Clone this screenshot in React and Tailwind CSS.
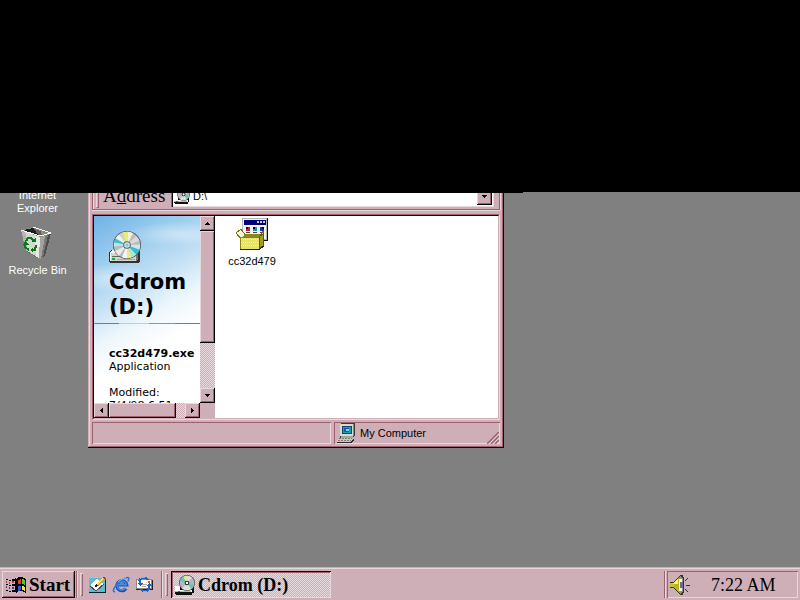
import React from "react";

const raised =
  "bg-[#cfafb7] shadow-[inset_-1px_-1px_#000,inset_1px_1px_#e7d8dc,inset_-2px_-2px_#9f6070]";
const thinSunken = "shadow-[inset_1px_1px_#9f6070,inset_-1px_-1px_#e7d8dc]";
const dither =
  "bg-[repeating-conic-gradient(#cfafb7_0_25%,#e7dade_0_50%)] bg-[length:2px_2px]";
const sans = "font-['Liberation_Sans',Arial,sans-serif] text-[11px] leading-[13px]";
const serif = "font-['Liberation_Serif','Times_New_Roman',serif]";

function CdDrive({ className }) {
  return (
    <svg viewBox="0 0 32 32" className={className} aria-hidden="true">
      <g shapeRendering="crispEdges">
        <path d="M0 21l3-2h26l2 2v9l-2 2H1l-1-1z" fill="#303030" />
        <path d="M1 21l3-2h23l-2 3z" fill="#f4f4f4" />
        <path d="M1 21h26v9H1z" fill="#d4d4d4" />
        <path d="M27 22l2-1v8l-2 1z" fill="#777" />
        <path d="M1 21h26v1H2v8H1z" fill="#fff" />
        <path d="M3 25h23v1H3z" fill="#666" />
        <path d="M3 27h3v2H3z" fill="#00b820" />
        <path d="M8 28h18v1H8z" fill="#aaa" />
      </g>
      <circle cx="18" cy="14" r="14" fill="#55595c" />
      <circle cx="18" cy="14" r="13.2" fill="#b9bcbd" />
      <path d="M18 14L10 3.500q3-2 5-2.400z" fill="#cfd8b0" />
      <path d="M18 14L14 1.500q3-.8 5-.7z" fill="#ecec74" />
      <path d="M18 14l1-13.200q3 0 5 1.500z" fill="#f1f1dc" />
      <path d="M18 14L6.500 7.500q1.500-3 3.500-4z" fill="#eef3f2" />
      <path d="M18 14L5 11.500q.5-2.500 1.500-4z" fill="#35c3cc" />
      <path d="M18 14L5 11.500q-.3 2.500 0 4z" fill="#bfe4e6" />
      <path d="M18 14L6 20q2 4 4 5z" fill="#e9e9e9" />
      <path d="M18 14l9 9.500q2.500-2.500 3.300-5z" fill="#2cc3cf" />
      <path d="M18 14l12.300 4.500q1-3 .8-5z" fill="#d6e4e4" />
      <path d="M18 14l9 9.500q-2 2-4.500 3z" fill="#aee4df" />
      <path d="M18 14l4.500 12.500q-2 .7-4.500.7z" fill="#ecec7e" />
      <path d="M18 14v13.200q-3 0-5-1z" fill="#f5f5ea" />
      <path d="M18 14l9-9q3 3 3.500 5z" fill="#d9d9d9" />
      <circle cx="18" cy="14" r="3.800" fill="#56636b" />
      <circle cx="18" cy="14" r="2.800" fill="#e4eef2" />
      <circle cx="18" cy="14" r="1.700" fill="#8fc0dc" />
    </svg>
  );
}

function CdDriveSmall({ className }) {
  return (
    <svg viewBox="0 0 20 20" className={className} aria-hidden="true">
      <g shapeRendering="crispEdges">
        <path d="M0 11h18v1h1v6h-2v2H1v-1H0z" fill="#111" />
        <path d="M0 11h5v4h12v2H0z" fill="#fff" />
        <path d="M0 16h16v1H0z" fill="#bbb" />
        <path d="M3 16h2v1H3z" fill="#00a820" />
      </g>
      <circle cx="12" cy="8" r="8" fill="#454a4c" />
      <circle cx="12" cy="8" r="7.300" fill="#b5b8b8" />
      <path d="M12 8L8 2q2-1.300 4-1.300z" fill="#e5e59a" />
      <path d="M12 8L5 6q.8-3 3-4z" fill="#62c5cb" />
      <path d="M12 8l7 2q-1 3-3 4z" fill="#62c5cb" />
      <path d="M12 8l4 6q-2 1.300-4 1.300z" fill="#e0e5c5" />
      <path d="M12 8V.7q3 0 5 2z" fill="#dedede" />
      <path d="M12 8v7.300q-3 0-5-2z" fill="#dedede" />
      <circle cx="12" cy="8" r="2.300" fill="#222" />
      <circle cx="12" cy="8" r="1.300" fill="#fff" />
    </svg>
  );
}

function RecycleBin() {
  return (
    <svg viewBox="0 0 32 32" className="h-8 w-8" aria-hidden="true" shapeRendering="crispEdges">
      <path d="M0 3L7 1l5-1 18 6-9 27-4-1-12-7z" fill="#8a8a84" />
      <path d="M3 3l9-2 7 3v4l-2 1z" fill="#1c1c1c" />
      <path d="M12 1l17 6-8 3-4-1 1-4z" fill="#8f8e80" />
      <path d="M13 2l7 2 1 5-4-1z" fill="#5d5c55" />
      <path d="M0 3l19 7v21l-3 0L5 24z" fill="#d6d6d2" />
      <path d="M0 3l4 1 3 20-2 0z" fill="#b4b4b0" />
      <path d="M14 9l5 1-1 21-3-1z" fill="#e8e8e4" />
      <path d="M19 10l5-1-4 23-2-1z" fill="#a2a29e" />
      <path d="M24 9l3-1-5 23-2 1z" fill="#777773" />
      <path d="M27 8l3-2-6 23-2 1z" fill="#4c4c49" />
      <path d="M0 3l19 6 11-3L12 0" fill="none" stroke="#f6f6f2" />
      <path d="M5 24l12 7" stroke="#707070" />
      <g fill="none" stroke="#067a18" strokeWidth="2">
        <path d="M5 14l2-3h3l3 3" />
        <path d="M15 18l-1 5h-3" />
        <path d="M8 23l-4-3v-3" />
      </g>
      <path d="M10 15h5v-4zM12 20v6l-3-3zM2 18l2-4 4 4z" fill="#067a18" />
    </svg>
  );
}

function SetupBox() {
  return (
    <svg viewBox="0 0 32 32" className="h-8 w-8" aria-hidden="true" shapeRendering="crispEdges">
      <path d="M6 0h26v23H6z" fill="#111" />
      <path d="M6 0h25v22H6z" fill="#b5b5b5" />
      <path d="M7 1h23v20H7z" fill="#f2f2f6" />
      <path d="M8 2h22v5H8z" fill="#00007b" />
      <path d="M21 3h2v2h-2zM24 3h2v2h-2zM27 3h2v2h-2z" fill="#c8c8d8" />
      <path d="M10 9h4v4h-4z" fill="#c5182f" />
      <path d="M17 9h4v4h-4z" fill="#1594a4" />
      <path d="M24 9h4v4h-4z" fill="#1638ac" />
      <path d="M10 9h2v2h-2zM17 9h2v2h-2zM26 9h2v2h-2z" fill="#102" />
      <path d="M10 14h4v1h-4zM17 14h4v1h-4zM24 14h4v1h-4z" fill="#444" />
      <path d="M0 15l5-4 5 7-5 3z" fill="#f6f6d0" stroke="#777016" />
      <path d="M5 20l4-4h18l-4 4z" fill="#8a8620" />
      <path d="M23 20l4-7 1 3-2 6z" fill="#e8e58c" stroke="#706d08" />
      <path d="M4 19h19v12H4z" fill="#e8e46a" stroke="#8a8410" />
      <path d="M23 19l4-3v12l-4 3z" fill="#a59e24" stroke="#5d5908" />
      <path d="M5 21h17M5 24h17M5 27h17" stroke="#f7f4a8" strokeDasharray="1 1" />
      <path d="M4 31h20l4-3" fill="none" stroke="#222" />
    </svg>
  );
}

function Computer() {
  return (
    <svg viewBox="0 0 20 20" className="h-5 w-5 shrink-0" aria-hidden="true" shapeRendering="crispEdges">
      <path d="M4 1l2-1h12l1 1v11l-2 3H4z" fill="#3a3a3a" />
      <path d="M4 1h13v12H4z" fill="#d9d9d2" />
      <path d="M17 1l1-1v12l-1 1z" fill="#85857e" />
      <path d="M6 3h10v8H6z" fill="#0a4d60" />
      <path d="M7 4h8v6H7z" fill="#1c9bb8" />
      <path d="M8 5h5v4H8z" fill="#2450c4" />
      <path d="M10 6h3v2h-3z" fill="#6fdfe2" />
      <path d="M5 13h12v2H5z" fill="#a5a59e" />
      <path d="M0 18l3-3h14l-2 4H0z" fill="#c9c9c0" />
      <path d="M3 15.500h13M2 17.500h13" stroke="#7c7c75" strokeDasharray="2 1" />
      <path d="M0 19h14l4-4v2l-3 3H1z" fill="#292929" />
    </svg>
  );
}

function WindowsLogo() {
  return (
    <svg viewBox="0 0 20 16" className="h-4 w-5 shrink-0" aria-hidden="true" shapeRendering="crispEdges">
      <path d="M10 2l3-2h3l4 2v14l-4-2h-3l-3 2z" fill="#000" />
      <path d="M12 3l3-1v5h-3z" fill="#f33b18" />
      <path d="M16 2l3 1v5l-3-1z" fill="#43d328" />
      <path d="M12 9h3v4l-3 1z" fill="#2457ed" />
      <path d="M16 9l3 1v4l-3-1z" fill="#ffe536" />
      <path d="M0 2h2v1H0zM3 3h2v1H3zM6 2h3v2H6zM0 7h2v1H0zM3 8h2v1H3zM6 7h3v2H6zM0 13h2v1H0zM3 14h2v1H3zM6 13h3v2H6zM9 1h1v14H9z" fill="#000" />
      <path d="M0 4h1v2H0zM3 5h1v2H3zM6 4h2v2H6z" fill="#c9333d" />
      <path d="M0 9h1v2H0zM3 10h1v2H3zM6 10h2v2H6z" fill="#333aa5" />
    </svg>
  );
}

function ShowDesktop() {
  return (
    <svg viewBox="0 0 17 16" className="h-4 w-[17px]" aria-hidden="true" shapeRendering="crispEdges">
      <path d="M0 1h17v15H0z" fill="#05222c" />
      <path d="M0 1h16v14H0z" fill="#5ebbd1" />
      <path d="M1 8l7-6 7 5-8 7z" fill="#fffef0" />
      <path d="M1 9l6 5 8-7" fill="none" stroke="#445" />
      <path d="M6 10l1-3 7-7 2 2-7 7z" fill="#e9a02a" />
      <path d="M7 8l6-7 1 1-6 7z" fill="#ffed5e" />
      <path d="M6 10l1-3 2 2z" fill="#222" />
      <path d="M13 0h2l2 2-1 1z" fill="#a23d18" />
    </svg>
  );
}

function ExplorerLogo() {
  return (
    <svg viewBox="0 0 18 17" className="h-[17px] w-[18px]" aria-hidden="true">
      <path d="M14 12.500a5 5 0 1 1 .8-3.500H6" fill="none" stroke="#174fae" strokeWidth="3.200" />
      <path d="M13.500 12a4.600 4.600 0 1 1 .8-3.300H6" fill="none" stroke="#3f8ff0" strokeWidth="1.600" />
      <path d="M3 16q-4-1 2-7.500Q12 1 16 1.500q1.500.5 0 4" fill="none" stroke="#2b74d4" strokeWidth="1.600" />
      <path d="M6 6q4-4 8-4.300" fill="none" stroke="#8cc8fa" />
    </svg>
  );
}

function MailIcon() {
  return (
    <svg viewBox="0 0 17 17" className="h-[17px] w-[17px]" aria-hidden="true" shapeRendering="crispEdges">
      <path d="M0 4h17v10H0z" fill="#222" />
      <path d="M0 3h16v10H0z" fill="#8b8b80" />
      <path d="M1 4h14v8H1z" fill="#fffdf2" />
      <path d="M12 5h2v2h-2z" fill="#d95730" />
      <path d="M6 8h5v1H6zM6 10h4v1H6z" fill="#aaa" />
      <path d="M3 7Q1 2 6 1h4l3 3h-2L9 3H7Q4 4 5 7l2 0-3 3-3-3z" fill="#1f5fd0" />
      <path d="M4 3q1-2 5-1" fill="none" stroke="#7db8f5" />
      <path d="M14 10q1 5-3 6H6l-2-3h2l2 1h2q2-1 2-4h-2l3-3 3 3z" fill="#1f5fd0" />
      <path d="M7 15h4" stroke="#7db8f5" />
    </svg>
  );
}

function Speaker() {
  return (
    <svg viewBox="0 0 20 20" className="h-5 w-5 shrink-0" aria-hidden="true" shapeRendering="crispEdges">
      <path d="M0 7h3l6-6 2-1h2l1 3v14l-1 3h-2l-2-1-6-6H0z" fill="#3b3810" />
      <path d="M0 8h4v4H0z" fill="#c6c42c" />
      <path d="M4 7l5-5v16l-5-5z" fill="#b8b51d" />
      <path d="M3 8l5-4v5H3z" fill="#f5f276" />
      <path d="M9 2l2-1 2 3v12l-2 3-2-1z" fill="#8d8d8d" />
      <path d="M9 4h3v12H9z" fill="#f6f6f6" />
      <path d="M10 7h3v6h-3z" fill="#6a6a9a" />
      <path d="M15 6l3-3M16 10h4M15 14l3 3" stroke="#333" />
    </svg>
  );
}

const arrows = {
  up: "M3 0h1v1h1v1h1v1h1v1H0V3h1V2h1V1h1z",
  down: "M0 0h7v1H6v1H5v1H4v1H3V3H2V2H1V1H0z",
  left: "M3 0h1v7H3V6H2V5H1V4H0V3h1V2h1V1h1z",
  right: "M0 0h1v1h1v1h1v1h1v1H3v1H2v1H1v1H0z",
};

function ArrowButton({ dir, label, className = "h-[15px] w-[15px]" }) {
  const upright = dir === "up" || dir === "down";
  return (
    <button
      type="button"
      aria-label={label}
      className={`flex shrink-0 items-center justify-center ${raised} ${className}`}
    >
      <svg
        viewBox={upright ? "0 0 7 4" : "0 0 4 7"}
        className={upright ? "h-[3px] w-[5px]" : "h-[5px] w-[3px]"}
        preserveAspectRatio="none"
        shapeRendering="crispEdges"
      >
        <path d={arrows[dir]} />
      </svg>
    </button>
  );
}

function Grip() {
  return (
    <div className="flex h-[27px] items-center gap-[2px]" aria-hidden="true">
      <span className="h-full w-[2px] border-l border-[#9f6070] bg-[#e7d8dc]" />
      <span className="h-[23px] w-[3px] bg-[#cfafb7] shadow-[inset_1px_1px_#e7d8dc,inset_-1px_-1px_#9f6070]" />
    </div>
  );
}

function ExplorerWindow() {
  return (
    <section
      aria-label="Cdrom (D:)"
      className="absolute -top-3 left-[88px] flex w-[416px] flex-col bg-[#cfafb7] p-1 pt-0 shadow-[inset_-1px_-1px_#000,inset_1px_1px_#cfafb7,inset_-2px_-2px_#9f6070,inset_2px_2px_#e7d8dc]"
    >
      <div className="flex h-[30px] items-center border border-t-0 border-[#9f6070] pt-[3px] pr-[5px] pl-[3px] shadow-[inset_1px_0_#e7d8dc,0_1px_#e7d8dc,1px_0_#e7d8dc]">
        <span className="-mt-[3px] h-[27px] w-[3px] shrink-0 border-r border-b border-l border-r-[#9f6070] border-b-[#9f6070] border-l-[#e7d8dc]" />
        <label htmlFor="address" className={`ml-1 w-[68px] ${serif} text-[19px] leading-5`}>
          A<span className="underline">d</span>dress
        </label>
        <div className="flex h-[22px] min-w-0 flex-1 items-center bg-white pr-[2px] pl-[3px] shadow-[inset_1px_1px_#9f6070,inset_2px_2px_#000,inset_-1px_-1px_#e7d8dc]">
          <CdDriveSmall className="h-4 w-4 shrink-0" />
          <input
            id="address"
            type="text"
            defaultValue="D:\"
            className={`ml-[3px] min-w-0 flex-1 bg-transparent outline-none ${sans}`}
          />
          <ArrowButton dir="down" label="Show addresses" className="h-[18px] w-[15px]" />
        </div>
      </div>

      <div className="mt-1 flex h-[206px] border border-t-[#9f6070] border-r-[#e7d8dc] border-b-[#e7d8dc] border-l-[#9f6070]">
        <div className="flex min-w-0 flex-1 border border-t-black border-r-[#cfafb7] border-b-[#cfafb7] border-l-black bg-white">
          <div className="flex w-[121px] shrink-0 flex-col">
            <div className="flex h-[187px]">
              <div className="min-w-0 flex-1 overflow-hidden bg-white bg-[radial-gradient(ellipse_55px_12px_at_85px_18px,#ffffff66,transparent),radial-gradient(ellipse_40px_14px_at_20px_62px,#ffffff77,transparent),linear-gradient(150deg,#6fb2e6_0%,#9accee_20%,#c3e0f5_38%,#eef7fc_54%,#ffffff_68%)] bg-[length:100%_185px] bg-no-repeat font-['DejaVu_Sans',Verdana,sans-serif] text-[11px] leading-[13px]">
                <CdDrive className="mt-[15px] ml-[15px] h-8 w-8" />
                <h1 className="mt-[7px] ml-[15px] text-[21px] leading-[25px] font-bold">
                  Cdrom (D:)
                </h1>
                <div className="mt-[3px] h-px bg-[linear-gradient(90deg,#d8593e_0_24%,#e8d44c_24%_52%,#72b455_52%_76%,#3e8bc0_76%)]" />
                <div className="mt-[23px] ml-[15px] whitespace-nowrap">
                  <p className="font-bold">cc32d479.exe</p>
                  <p>Application</p>
                  <p className="mt-[13px]">Modified:</p>
                  <p>7/4/98 6:51</p>
                </div>
              </div>
              <div className={`flex w-[15px] flex-col ${dither}`}>
                <ArrowButton dir="up" label="Scroll up" />
                <div className={`h-[112px] ${raised}`} />
                <div className="flex-1" />
                <ArrowButton dir="down" label="Scroll down" />
              </div>
            </div>
            <div className="flex h-[15px] bg-[#cfafb7]">
              <div className={`flex flex-1 ${dither}`}>
                <ArrowButton dir="left" label="Scroll left" />
                <div className={`w-[67px] ${raised}`} />
                <div className="flex-1" />
                <ArrowButton dir="right" label="Scroll right" />
              </div>
              <div className="w-[15px]" />
            </div>
          </div>
          <div className="min-w-0 flex-1 pt-[2px] pl-[7px]">
            <button type="button" className={`flex w-[60px] flex-col items-center gap-[5px] ${sans}`}>
              <SetupBox />
              <span>cc32d479</span>
            </button>
          </div>
        </div>
      </div>

      <div className={`mt-[2px] flex h-[22px] gap-[3px] ${sans}`}>
        <div className={`w-[239px] ${thinSunken}`} />
        <div className={`flex flex-1 items-center gap-1 pl-[2px] ${thinSunken}`}>
          <Computer />
          <span className="flex-1">My Computer</span>
          <svg viewBox="0 0 12 12" className="mr-px h-3 w-3 self-end" aria-hidden="true">
            <path d="M0 12L12 0M4 12l8-8M8 12l4-4" stroke="#9f6070" strokeWidth="1.500" />
            <path d="M2 12L12 2M6 12l6-6M10 12l2-2" stroke="#e7d8dc" />
          </svg>
        </div>
      </div>
    </section>
  );
}

export default function App() {
  return (
    <div className="flex h-screen flex-col overflow-hidden bg-[#808080] text-black">
      <div className="h-48 shrink-0 bg-black" />
      <main className="relative min-h-0 flex-1 overflow-hidden">
        <div className={`flex w-[75px] flex-col items-center text-center text-white ${sans}`}>
          <button type="button" className="-mt-[3px]">
            Internet
            <br />
            Explorer
          </button>
          <button type="button" className="mt-3 flex flex-col items-center gap-[5px]">
            <RecycleBin />
            <span>Recycle Bin</span>
          </button>
        </div>
        <ExplorerWindow />
        <div className="absolute top-0 left-0 h-px w-[523px] bg-black" />
      </main>

      <footer
        className={`flex h-[33px] shrink-0 items-start bg-[#cfafb7] px-[2px] pt-1 shadow-[inset_0_1px_#cfafb7,inset_0_2px_#e7d8dc] ${serif} text-[19px] leading-5`}
      >
        <button
          type="button"
          className={`flex h-[27px] w-[73px] items-center gap-[3px] pl-1 font-bold ${raised}`}
        >
          <WindowsLogo />
          Start
        </button>
        <div className="ml-px">
          <Grip />
        </div>
        <nav className="ml-[6px] flex h-[27px] w-[72px] items-center gap-[6px]" aria-label="Quick launch">
          <button type="button" aria-label="Show desktop"><ShowDesktop /></button>
          <button type="button" aria-label="Internet Explorer"><ExplorerLogo /></button>
          <button type="button" aria-label="Mail"><MailIcon /></button>
        </nav>
        <Grip />
        <button
          type="button"
          className={`ml-[3px] flex h-[27px] w-[160px] items-center gap-[3px] pl-1 text-[18px] font-bold shadow-[inset_1px_1px_#000,inset_-1px_-1px_#e7d8dc,inset_2px_2px_#9f6070] ${dither}`}
        >
          <CdDriveSmall className="h-5 w-5 shrink-0" />
          Cdrom (D:)
        </button>
        <div className="flex-1" />
        <span className="h-[27px] w-[2px] border-l border-[#9f6070] bg-[#e7d8dc]" />
        <div className={`ml-px flex h-[27px] w-[131px] items-center pl-[3px] ${thinSunken}`}>
          <Speaker />
          <time className="ml-[21px] text-[18px]">7:22 AM</time>
        </div>
      </footer>
    </div>
  );
}
